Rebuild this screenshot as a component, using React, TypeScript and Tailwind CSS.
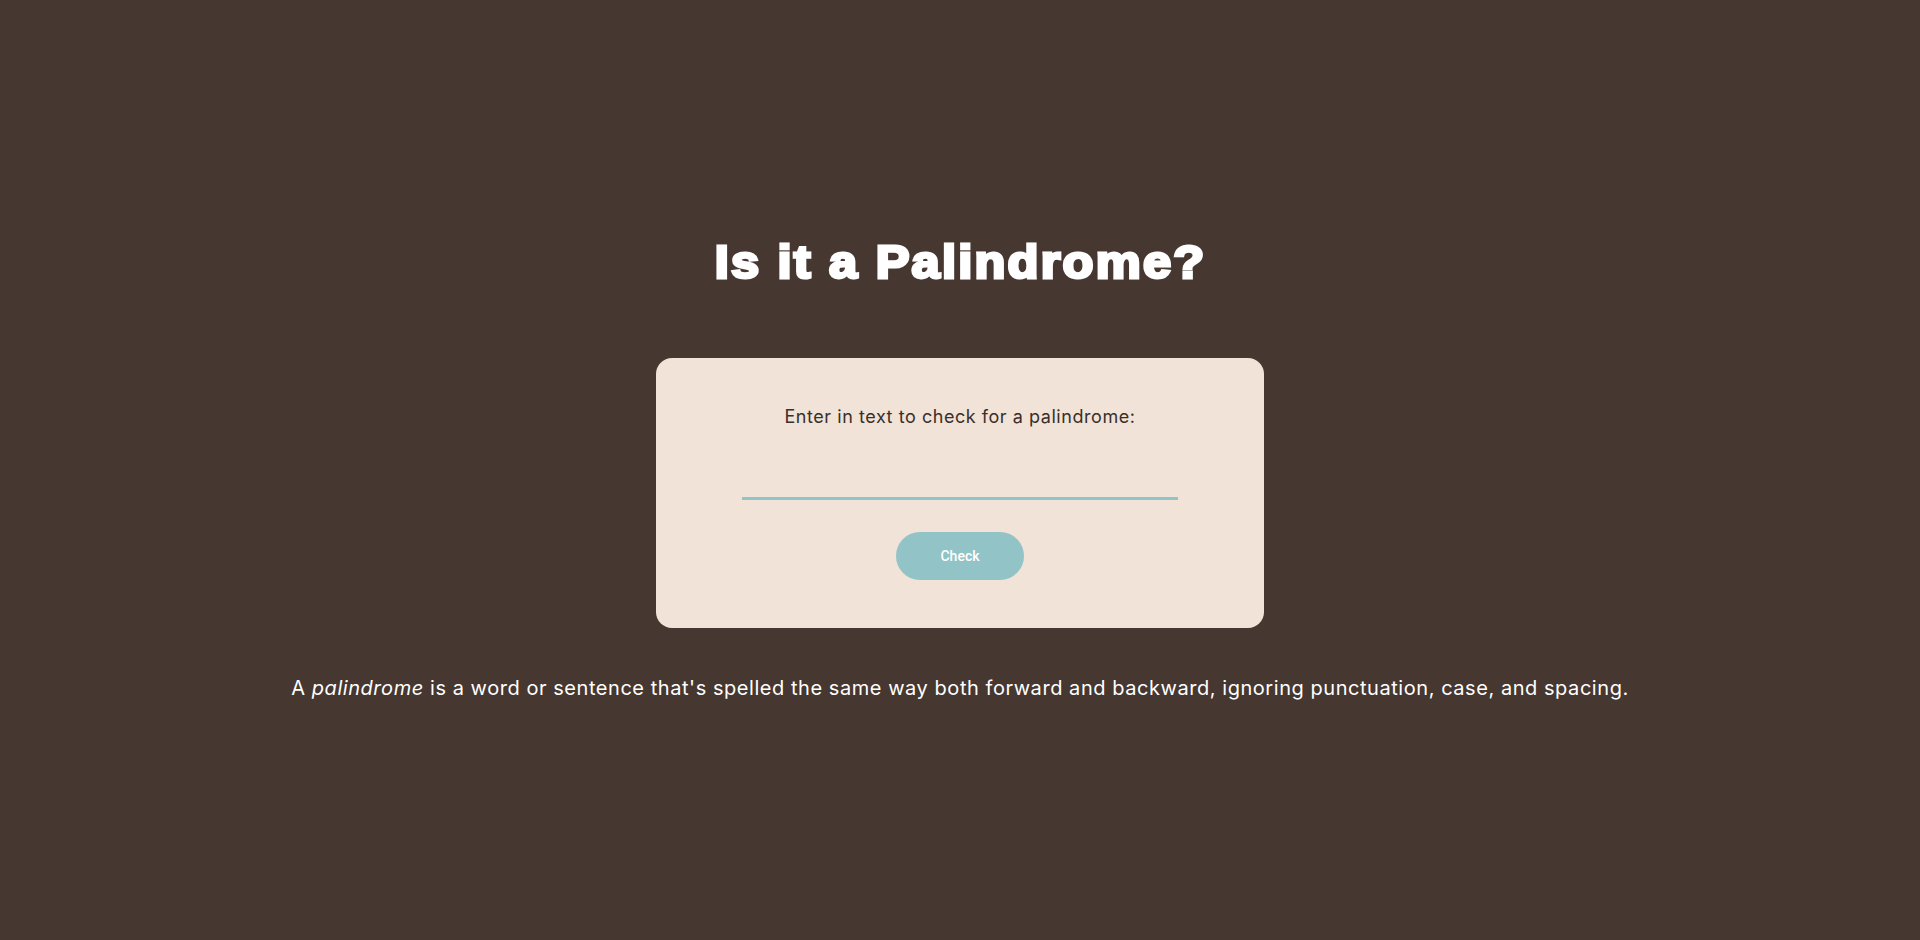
import React from "react";

export default function App() {
  return (
    <div className="w-full h-[940px] bg-[#463730] flex flex-col items-center pt-[234px] font-['Inter',sans-serif] tracking-[0.55px]">
      <h1 className="h-[56px] text-[46px] leading-[56px] font-bold text-white tracking-[2px] font-['Liberation_Sans',Arial,sans-serif] [-webkit-text-stroke:3px_white] scale-x-[1.1]">
        Is it a Palindrome?
      </h1>
      <div className="mt-[68px] w-[608px] rounded-2xl bg-[#f1e3d7] flex flex-col items-center pt-[48px] pb-[48px]">
        <label className="text-[18px] leading-[22px] text-[#3a2f2a]">
          Enter in text to check for a palindrome:
        </label>
        <input
          type="text"
          className="mt-[32px] w-[436px] h-[40px] bg-transparent border-0 border-b-[3px] border-[#92c3c6] outline-none text-center text-[18px] text-[#3a2f2a]"
        />
        <button className="mt-[32px] w-[128px] h-[48px] rounded-full bg-[#92c3c6] text-white text-[14px] tracking-normal font-medium font-['Roboto',sans-serif]">
          Check
        </button>
      </div>
      <p className="mt-[46px] text-[20px] leading-[28px] text-white">
        A <em>palindrome</em> is a word or sentence that's spelled the same way both forward and backward, ignoring punctuation, case, and spacing.
      </p>
    </div>
  );
}
